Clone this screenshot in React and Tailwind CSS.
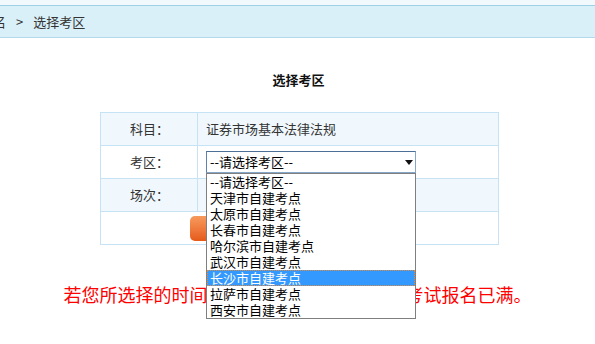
import React from "react";

const font = { fontFamily: '"Noto Sans CJK SC", "Noto Sans", sans-serif' };

const options = [
  "--请选择考区--",
  "天津市自建考点",
  "太原市自建考点",
  "长春市自建考点",
  "哈尔滨市自建考点",
  "武汉市自建考点",
  "长沙市自建考点",
  "拉萨市自建考点",
  "西安市自建考点",
];

export default function App() {
  return (
    <div className="w-[595px] h-[344px] bg-white overflow-hidden text-[#333]" style={font}>
      <div className="h-[5px] bg-[#f2f9fd]" />
      <div className="h-[33px] bg-[#d9f0f8] border-t border-b border-t-[#9dd1e7] border-b-[#b3d9ea] flex items-center overflow-hidden text-[13px] text-[#333]">
        <span className="ml-[-20px] whitespace-nowrap">报名</span>
        <span className="mx-[10px]">&gt;</span>
        <span className="whitespace-nowrap">选择考区</span>
      </div>

      <div className="mt-[32px] h-[20px] leading-[20px] text-center text-[13px] font-bold text-[#111] pl-[2px]">
        选择考区
      </div>

      <div className="mt-[22px] ml-[100px] w-[399px] border border-[#c6e3f5] text-[13px]">
        <div className="flex h-[33px] border-b border-[#c6e3f5] bg-[#f0f8fe]">
          <div className="w-[97px] border-r border-[#c6e3f5] flex items-center justify-center pl-[1px]">科目：</div>
          <div className="flex-1 flex items-center pl-[8px]">证券市场基本法律法规</div>
        </div>
        <div className="flex h-[33px] border-b border-[#c6e3f5] bg-white">
          <div className="w-[97px] border-r border-[#c6e3f5] flex items-center justify-center pl-[1px]">考区：</div>
          <div className="flex-1 flex items-center pl-[8px]">
            <div className="relative w-[210px] h-[22px]">
              <div className="h-[22px] border border-[#86a6c8] border-t-[#4a6f99] border-l-[#5d82ad] flex items-center pl-[3px] text-[13px] text-black bg-white">
                <span className="flex-1">--请选择考区--</span>
                <svg width="8" height="5" viewBox="0 0 8 5" className="mr-[2px]">
                  <path d="M0 0H8L4 5Z" fill="#111" />
                </svg>
              </div>
              <div className="absolute left-0 top-[22px] w-[210px] border border-[#7f7f7f] bg-white z-10 text-[13px] text-black">
                {options.map((o, i) => (
                  <div
                    key={o}
                    className={
                      i === 6
                        ? "h-[16px] leading-[16px] pl-[3px] bg-[#3399ff] text-white outline outline-1 outline-dotted outline-[#e08a3a] -outline-offset-1"
                        : "h-[16px] leading-[16px] pl-[3px]"
                    }
                  >
                    {o}
                  </div>
                ))}
              </div>
            </div>
          </div>
        </div>
        <div className="flex h-[33px] border-b border-[#c6e3f5] bg-[#f0f8fe]">
          <div className="w-[97px] border-r border-[#c6e3f5] flex items-center justify-center pl-[1px]">场次：</div>
          <div className="flex-1" />
        </div>
        <div className="flex h-[32px] items-center bg-white pl-[89px]">
          <button className="w-[80px] h-[25px] rounded-[5px] bg-gradient-to-b from-[#f79a5c] to-[#e55a17] text-white text-[13px]">
            确定
          </button>
        </div>
      </div>

      <div className="mt-[37px] h-[24px] leading-[24px] text-center text-[18px] text-[#ff0000] whitespace-nowrap">
        若您所选择的时间无可选考区，说明该场次考试报名已满。
      </div>
    </div>
  );
}
